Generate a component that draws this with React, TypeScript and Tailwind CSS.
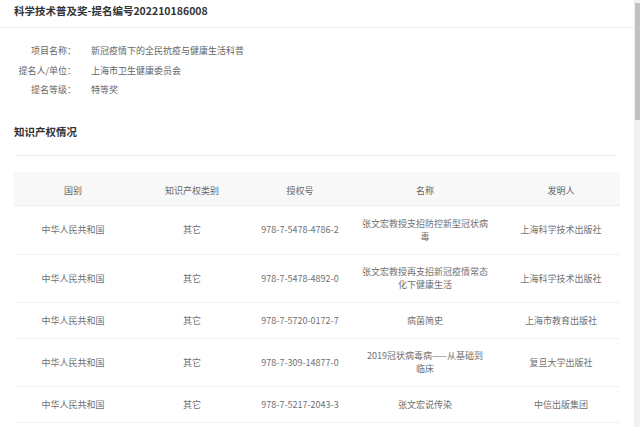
import React from "react";

type Row = {
  country: string;
  kind: string;
  code: string;
  name: string[];
  owner: string;
};

const rows: Row[] = [
  {
    country: "中华人民共和国",
    kind: "其它",
    code: "978-7-5478-4786-2",
    name: ["张文宏教授支招防控新型冠状病", "毒"],
    owner: "上海科学技术出版社",
  },
  {
    country: "中华人民共和国",
    kind: "其它",
    code: "978-7-5478-4892-0",
    name: ["张文宏教授再支招新冠疫情常态", "化下健康生活"],
    owner: "上海科学技术出版社",
  },
  {
    country: "中华人民共和国",
    kind: "其它",
    code: "978-7-5720-0172-7",
    name: ["病菌简史"],
    owner: "上海市教育出版社",
  },
  {
    country: "中华人民共和国",
    kind: "其它",
    code: "978-7-309-14877-0",
    name: ["2019冠状病毒病——从基础到", "临床"],
    owner: "复旦大学出版社",
  },
  {
    country: "中华人民共和国",
    kind: "其它",
    code: "978-7-5217-2043-3",
    name: ["张文宏说传染"],
    owner: "中信出版集团",
  },
];

const info = [
  { label: "项目名称：", value: "新冠疫情下的全民抗疫与健康生活科普" },
  { label: "提名人/单位：", value: "上海市卫生健康委员会" },
  { label: "提名等级：", value: "特等奖" },
];

const headers = ["国别", "知识产权类别", "授权号", "名称", "发明人"];

export default function App() {
  return (
    <div className="flex h-[427px] w-[640px] overflow-hidden bg-white font-['Noto_Sans_CJK_SC','Noto_Sans',sans-serif]">
      <div className="flex-1">
        <div className="h-[28px] border-b border-[#f0f0f0] pl-[14px] pt-[4px] text-[10.5px] font-bold leading-[14px] text-[#333]">
          科学技术普及奖-提名编号202210186008
        </div>

        <div className="pt-[13px]">
          {info.map((item) => (
            <div key={item.label} className="flex text-[9px] leading-[19.5px] text-[#666]">
              <div className="w-[76px] text-right">{item.label}</div>
              <div className="pl-[15px]">{item.value}</div>
            </div>
          ))}
        </div>

        <div className="mt-[25.5px] pl-[14px] text-[10.5px] font-bold leading-[14px] text-[#333]">
          知识产权情况
        </div>
        <div className="ml-[16px] mt-[16px] w-[600px] border-b border-[#ececec]" />

        <table className="ml-[14px] mt-[16px] w-[606px] table-fixed border-collapse text-[9px] leading-[13px] text-[#666]">
          <colgroup>
            <col className="w-[118px]" />
            <col className="w-[120px]" />
            <col className="w-[96px]" />
            <col className="w-[154px]" />
            <col className="w-[118px]" />
          </colgroup>
          <thead>
            <tr className="border-b border-[#ececec] bg-[#f8f8f8]">
              {headers.map((h) => (
                <th key={h} className="pb-[8px] pt-[12px] text-center font-normal">
                  {h}
                </th>
              ))}
            </tr>
          </thead>
          <tbody>
            {rows.map((r) => (
              <tr key={r.code} className="border-b border-[#f2f2f2] text-[#707070]">
                <td className="py-[10.75px] text-center align-middle">{r.country}</td>
                <td className="py-[10.75px] text-center align-middle">{r.kind}</td>
                <td className="whitespace-nowrap py-[10.75px] text-center align-middle">{r.code}</td>
                <td className="py-[10.75px] text-center align-middle">
                  {r.name.map((line) => (
                    <div key={line} className="whitespace-nowrap">
                      {line}
                    </div>
                  ))}
                </td>
                <td className="py-[10.75px] text-center align-middle">{r.owner}</td>
              </tr>
            ))}
          </tbody>
        </table>
      </div>

      <div className="w-[6px] bg-[#f1f1f1] pl-[1px]">
        <div className="mt-[3px] h-[117px] w-[5px] bg-[#c1c1c1]" />
      </div>
    </div>
  );
}
